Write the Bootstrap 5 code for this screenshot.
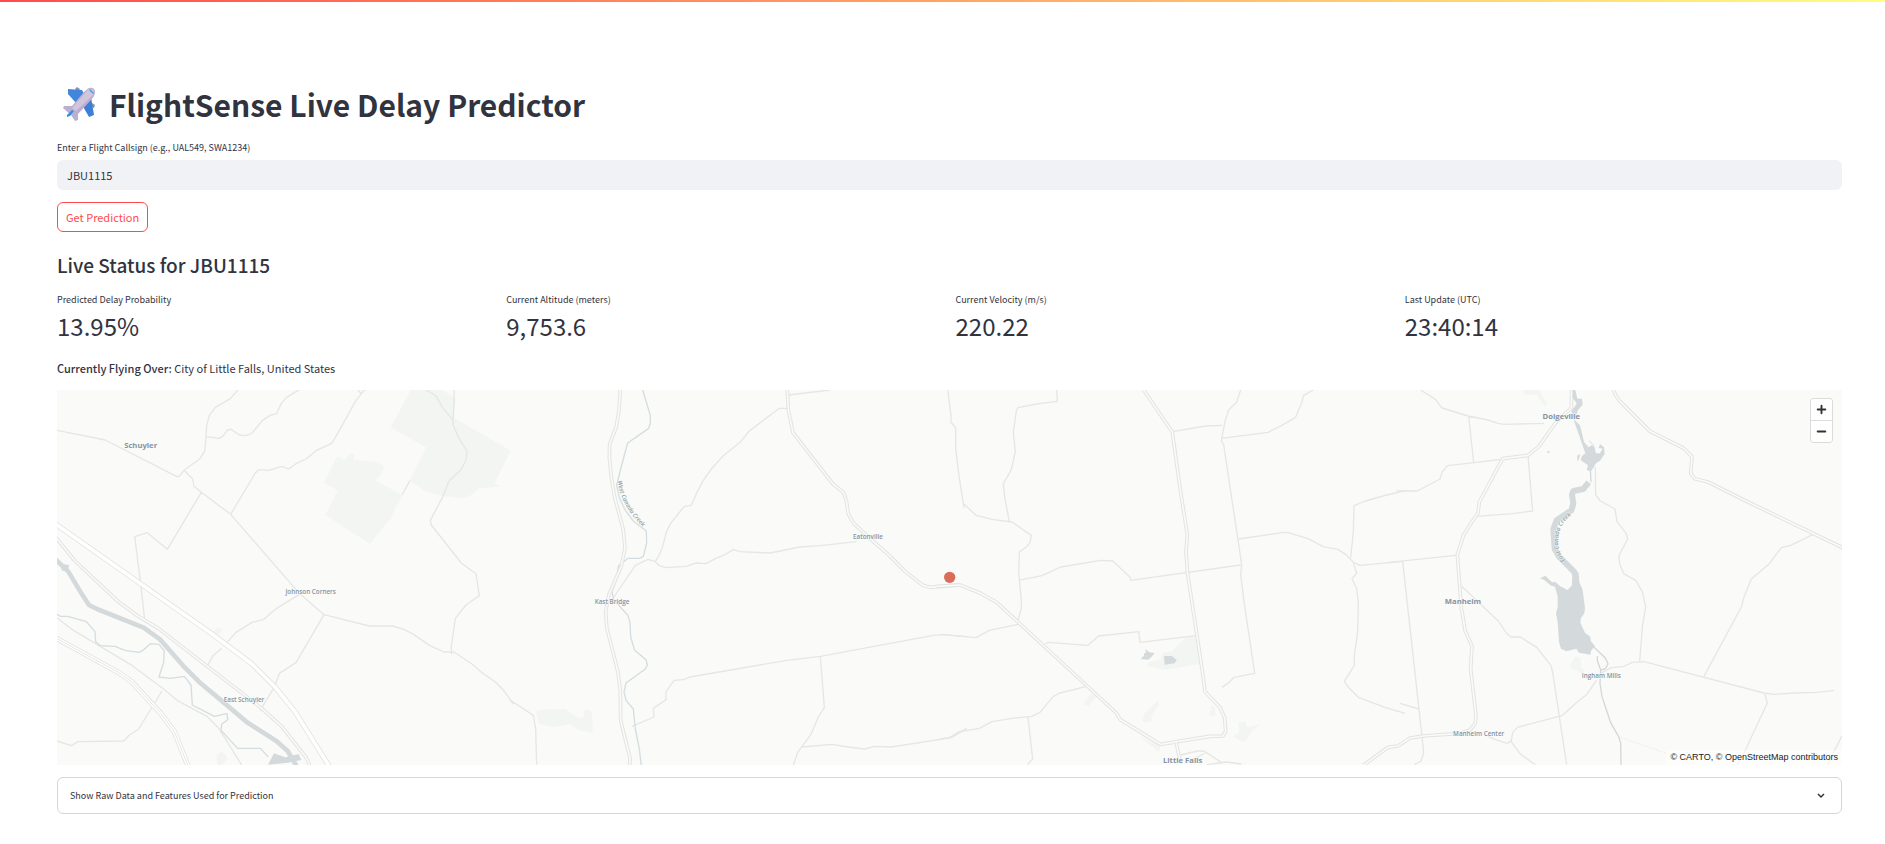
<!DOCTYPE html>
<html lang="en">
<head>
<meta charset="utf-8">
<meta name="viewport" content="width=device-width, initial-scale=1">
<title>FlightSense Live Delay Predictor</title>
<link href="https://cdn.jsdelivr.net/npm/bootstrap@5.3.0/dist/css/bootstrap.min.css" rel="stylesheet">
<style>
  body { font-family: "Noto Sans CJK JP", "Liberation Sans", sans-serif; color: #31333f; font-size: 11px; line-height: 18px; background: #fff; }
  .top-strip { height: 2px; background: linear-gradient(90deg, #ff4b4b, #fffd80); }
  .page { padding: 82px 43px 30px 57px; }
  .page-title { font-size: 30px; line-height: 40px; font-weight: 700; gap: 13px; padding-left: 5px; }
  .small-label { font-size: 9px; line-height: 16px; }
  .callsign { background: #f0f2f6; border: 0; border-radius: 6px; height: 30px; padding: 0 10px; font-size: 11px; color: #31333f; }
  .callsign:focus { background: #f0f2f6; color: #31333f; }
  .predict { --bs-btn-color: #ff4b4b; --bs-btn-border-color: #ff4b4b; --bs-btn-hover-bg: #ff4b4b; --bs-btn-hover-color: #fff; --bs-btn-hover-border-color: #ff4b4b; --bs-btn-active-bg: #ff4b4b; --bs-btn-bg: #fff; height: 30px; margin-top: 12px; padding: 0 8px; font-size: 11px; line-height: 18px; border-radius: 6px; }
  .section-title { margin: 20px 0 14px; font-size: 19px; line-height: 26px; font-weight: 500; }
  .metrics { display: grid; grid-template-columns: repeat(4, 1fr); gap: 12px; }
  .metric-value { font-size: 24px; line-height: 36px; }
  .over-text { margin-top: 15px; }
  .over-text strong { font-weight: 500; }
  .map-box { margin-top: 13px; height: 375px; background: #fafaf8; overflow: hidden; }
  .map-box > svg { width: 100%; height: 100%; display: block; }
  .zoom-group { top: 9px; right: 10px; width: 21px; border-radius: 3px; box-shadow: 0 0 0 1px rgba(0,0,0,.12); background: #fff; overflow: hidden; }
  .zoom-group button { height: 21px; padding: 0; border: 0; background: #fff; display: flex; align-items: center; justify-content: center; }
  .zoom-group button + button { height: 22px; border-top: 1px solid #ddd; }
  .zoom-group svg { width: 21px; height: 21px; }
  .credits { right: 0; bottom: 0; padding: 0 4px; background: rgba(255,255,255,.5); font: 9px/15px "Liberation Sans", sans-serif; color: #222; }
  .credits a { color: inherit; text-decoration: none; }
  .raw-data { margin-top: 12px; border: 1px solid #d6d6d9; border-radius: 6px; }
  .raw-data summary { list-style: none; height: 35px; padding: 0 14px 0 12px; }
  .raw-data summary::-webkit-details-marker { display: none; }
  .green { fill: #f2f5f2; }
  .lake { fill: #d4dadc; }
  .minor { fill: none; stroke: #e6e6e4; stroke-width: 4; stroke-linejoin: round; }
  .stream { fill: none; stroke: #d4dde1; stroke-width: 4; stroke-linejoin: round; }
  .river { fill: none; stroke: #d4dadc; stroke-width: 14; stroke-linejoin: round; }
  .casing { fill: none; stroke: #e3e3e3; stroke-width: 11; stroke-linejoin: round; }
  .lane { fill: none; stroke: #fafaf8; stroke-width: 5; stroke-linejoin: round; }
  .wide { stroke-width: 16; }
  .wide-lane { stroke-width: 11; stroke: #fff; }
  .median { fill: none; stroke: #e6e6e4; stroke-width: 3; }
  .place { font-family: "Open Sans", sans-serif; fill: #8594a3; text-anchor: middle; stroke: #fafaf8; stroke-width: 3; paint-order: stroke; }
  .town { font-size: 23px; font-weight: 700; }
  .hamlet { font-size: 19px; font-weight: 600; }
  .creek { font-size: 18px; font-style: italic; font-weight: 600; fill: #8fa3a8; font-family: "Open Sans", sans-serif; stroke: #fafaf8; stroke-width: 2; paint-order: stroke; }
</style>
</head>
<body>
<div class="top-strip"></div>
<main class="page d-flex flex-column">
  <h1 class="page-title d-flex align-items-center mb-0">
    <svg width="34" height="36" viewBox="0 0 34 36" aria-hidden="true">
      <path d="M13 3l2-2 3 2-2 3zM30 17l3 2-1 3-3-1z" fill="#8a93a8"/>
      <path d="M6 3l14 1 3 6-8 8-9-10z" fill="#4186dc"/>
      <path d="M29 11l3 18-5 2-8-14z" fill="#3d7fd6"/>
      <path d="M27 2c4-1 6 1 6 4 0 3-2 6-4 8L16 28l0 6-3 1-4-6-8-7 1-2 8 0L22 6c2-2 3-3 5-4z" fill="#bcaed0"/>
      <path d="M26 3c3-1 6 0 6 3 0 2-2 4-3 5L14 25l-4-3L23 7z" fill="#d5cbe0" opacity=".8"/>
      <path d="M28 3l4 4-1 1-4-4z" fill="#36a5e0"/>
      <path d="M5 29l5-5 2 1-4 5-3 1z" fill="#328fea"/>
    </svg>
    <span>FlightSense Live Delay Predictor</span>
  </h1>
  <label for="callsign" class="small-label mt-3 mb-1">Enter a Flight Callsign (e.g., UAL549, SWA1234)</label>
  <input id="callsign" type="text" class="callsign form-control shadow-none" value="JBU1115">
  <button type="button" class="predict btn align-self-start">Get Prediction</button>
  <h2 class="section-title">Live Status for JBU1115</h2>
  <div class="metrics">
    <div><div class="small-label">Predicted Delay Probability</div><div class="metric-value">13.95%</div></div>
    <div><div class="small-label">Current Altitude (meters)</div><div class="metric-value">9,753.6</div></div>
    <div><div class="small-label">Current Velocity (m/s)</div><div class="metric-value">220.22</div></div>
    <div><div class="small-label">Last Update (UTC)</div><div class="metric-value">23:40:14</div></div>
  </div>
  <p class="over-text mb-0"><strong>Currently Flying Over:</strong> City of Little Falls, United States</p>
  <div class="map-box position-relative">
    <svg viewBox="0 0 5355 1125" preserveAspectRatio="xMidYMid slice" role="img" aria-label="Map of the aircraft position">
      <!-- west: Schuyler -->
      <g transform="translate(-21 -15)">
        <path class="green" d="M1083 15h92l42 24-5 60 170 98-48 96 16 12-60 4-28 22-20 8-68-6-50-16-44-30 48-100-106-60zM862 214l22 12 16-20h12v20l60 4 30 12-6 24-20 20 80 44-36 72-60 74-134-86 38-74-42-22zM478 750l24-22 12 2v10l-16 12zM500 1110l14-10 14 10 4 14-18 16h-12z"/>
        <path class="minor" d="M1080 286l-24 44M21 136l145 29 215 110 8-2 13-17 48-35 14-22 4-43 2-35 8-30 18-24 45-26 28-32 10-30M468 155l40 5 12-8 12-17 12-2 24 17 20 2 18-8 32-38 22-15 20-5 14-31 16-18 46-28M402 256l26 26 4 22 22 18 88 66 206 237M454 322L352 493l-60-50-38 12 18 140 12 110M542 388l74-124 10-10 30 2 40-12 20 8 22-16 30-14 32-26 44-20 12-18 62-112 24-30 28-11M924 15l10 12M1128 15l30 18 18 32 34 42M1213 15l-4 105 20 44 22 34-2 24-14 30-38 36-18 46-38 72 3 14 90 114 44 32 10 66-40 28-32 40-12 84 1 24M748 628l-74 46-34 30-34 8-48 30-32 36M748 625l74 64 136 34h70l34 10 30 16 46 32 44 20h30l54 36 30 26 40 28 24 24 30 42M822 689l-84 144-50 32-14 40-44 72M515 790l-26 22-20 36M21 698l46 36 180 108 94 70 40 34 90 48 34 34 70 112M336 918l-70 114-28 18-16 18-138 2-20 12-43-14"/>
        <path class="stream" d="M21 688l10 6h22l56 16 26 30 2 30 14 12 44 2 30 12 42 6 12-6 22-20 26 2 16 20-2 34-14 44 34 4 42-6 20 26 4 60 66 34 38-8 2 18-18 14-2 18 50 54h68l24 26"/>
        <path class="river" d="M15 522l40 38 36 60 26 40 24 12 140 56 50 36 70 80 50 50 60 50 80 68 88 56 34 30 26 44"/>
        <path class="lake" d="M21 520l20 18 16 2-2 12-18 6zM654 1139l18-34 34 12 40-10 8 18-40 8z"/>
        <path class="casing wide" d="M15 416l470 330 120 90 70 70 60 74 106 169"/><path class="lane wide-lane" d="M15 416l470 330 120 90 70 70 60 74 106 169"/>
        <path class="casing" d="M15 454l60 74 130 122 60 44 60 36 310 240 60 54 74 94 10 24"/><path class="lane" d="M15 454l60 74 130 122 60 44 60 36 310 240 60 54 74 94 10 24"/>
        <path class="casing wide" d="M15 758l190 104 40 28 88 96 40 54 40 100"/><path class="lane wide-lane" d="M15 758l190 104 40 28 88 96 40 54 40 100"/><path class="median" d="M15 758l190 104 40 28 88 96 40 54 40 100"/>
        <text class="place town" x="272" y="190">Schuyler</text>
        <text class="place hamlet" x="782" y="626">Johnson Corners</text>
        <text class="place hamlet" x="582" y="950">East Schuyler</text>
      </g>
      <!-- centre west: West Canada Creek and Eatonville -->
      <g transform="translate(1329 -15)">
        <path class="green" d="M108 980l20-6 68-2 38 26h16l6-26 20 8 2 64-40-8-28-18-50 8-34-6-10-6z"/>
        <path class="minor" d="M30 945l70 46 7 40 3 108M866 30l124-15M862 70h-24l-90 68-28 34-50 40-36 40-24 34-16 30-20 45-22 4-40 50-12 24-14 52-10 22-10 17-22-7-38 18-66 98M466 530l12 12 20 6 60-4 30-10 30 2 30-16 28-12 24-14 20 6 90 4 90-18 60-4 110-12M396 1024l66-28-2-26 38-26v-24l24-34 28-2 20-8 290-50 101-12 339-63 30-2 70 6M961 814l12 154-18 28-22 52-40 54-13 38M906 1086l90-8 48 8 50 6 30-8 50 2 180-28 46-28M1343 15l10 76v20l14 18v60l8 70 17 110"/>
        <path class="stream" d="M428 15l23 76v24l-6 16-62 43-18 66-15 60 8 38 18 38 24 32 39 30 1 36-10 40-12 6h-34l-28 22-8 44-12 34 4 22 44 50 6 20 2 44 12 40 34 28 4 16-6 12-58 42-6 26 6 26 22 26 6 60 12 60 9 77"/>
        <path class="casing" d="M361 15l-4 60-8 50-20 52-1 40 6 60 10 60 26 98 5 54-11 54-38 88-9 48 3 48 34 134 7 58 1 88 28 112-1 40-8 80"/><path class="lane" d="M361 15l-4 60-8 50-20 52-1 40 6 60 10 60 26 98 5 54-11 54-38 88-9 48 3 48 34 134 7 58 1 88 28 112-1 40-8 80"/>
        <path class="casing" d="M862 15l3 60 14 68 120 154 32 26 8 24 6 40 16 28 54 50 50 44 50 50 54 42 20 6 70-6 20-1"/><path class="lane" d="M862 15l3 60 14 68 120 154 32 26 8 24 6 40 16 28 54 50 50 44 50 50 54 42 20 6 70-6 20-1"/>
        <path id="west-creek" d="M353 288q14 94 100 156" fill="none"/>
        <text class="creek"><textPath href="#west-creek">West Canada Creek</textPath></text>
        <text class="place hamlet" x="336" y="656">Kast Bridge</text>
        <text class="place hamlet" x="1104" y="461">Eatonville</text>
      </g>
      <!-- centre east: Little Falls -->
      <g transform="translate(2649 -15)">
        <path class="green" d="M772 752l10 84-90 16-20 2-52-12 6-10 34-8 10-20 30-8 42-42zM434 950l20-24 14 10-22 26-12-2zM608 1005l6-20 40-38 4 10-24 34v18l-18 4zM808 992l6-28h8l5 28zM896 1012h20l6 16 42-12-30 24-20 30-36-14 20-14zM602 1056l60 26-6 18z"/>
        <path class="lake" d="M602 822l10-10v-8h6l-2-12 12 10 16 2-12 14-8 6zM672 813h24l14 12-6 10-30 4z"/>
        <path class="minor" d="M72 357l36 34 48 12 60 8 58 40-4 22-10 12-22 16-2 60 8 86v24l-12 42M350 15l2 34-56 7-62 12-5 10-9 62 6 60-12 54-24 42 4 40 14 74M236 586l70-14 56-26 120-20 36 2 52 48 2 10 330-46M697 140l100-17 50-2M902 15l-12 36-24 24-10 30-12 62 7 12 54 360-3 30 10 80 32 216-62 12-16 16-20 14M844 160l140-18 40-20 42-24 20-46 4-20 30-17M896 462l136-20 12 1 60 18 46 24 44 8 24 16 24 24 18 8 130-12M1400 316l-60 14-64 18-34 14-2 80-8 76M1240 535l10 30-14 16 14 30 5 40-2 90-10 70v30l-30 48 12 18 30 30 80 30 60 18M0 748l108 10 40-22 86-18M316 776l10-4 118 9 32-28 120-13 4 32 170-20M0 1062l28-4 30-18 60-10 38-20 60-10 60-6 24-12 40-48 20-10 80-20M264 996l14 126-16 17M722 1110l50-12h20l52 34M740 1132l56-28M800 1139l60-8 44 6"/>
        <path class="casing" d="M611 15l86 126 22 160 23 150-4 46 4 64 38 250 14 98v10l46 48 14 32 3 40-8 14-40 1-148 24-120-74-12-20L170 652l-50-28-60-24-70 4"/><path class="lane" d="M611 15l86 126 22 160 23 150-4 46 4 64 38 250 14 98v10l46 48 14 32 3 40-8 14-40 1-148 24-120-74-12-20L170 652l-50-28-60-24-70 4"/>
        <path class="casing" d="M708 1072l14 62"/><path class="lane" d="M708 1072l14 62"/>
        <text class="place town" x="728" y="1135">Little Falls</text>
        <circle cx="29" cy="577" r="17" fill="#da6d59"/>
      </g>
      <!-- east: Dolgeville and East Canada Creek -->
      <g transform="translate(4029 -15)">
        <path class="green" d="M368 15h50l24 42-8 8-24-36h-34zM512 836l14-22 16 4 2 30 10 8-6 10-38-18z"/>
        <path class="minor" d="M62 15l44 28 20 26 78 24 60 12 30 10 20 3 118-3M206 94l15 138M-10 318h62l68-36 6-20 16-20 80-9 90-11M384 212l14 166-60 8-108 8M-40 533l207-22M8 530l58 524 5 50-8 24-20 11M0 955l56 17M185 604l110 104 24 36 14 12h28l50 32 42 54 5 20 42 277M586 245l1 85 14 18 44 24 6 38 28 36 4 16-26 50 2 24 12 30 36 20 20 34 10 46-10 60-8 104M600 866l34-18 38-4 24-12 36-2 360 94 30 4 60-4 70-2 50-6M912 874l112-208 8-30 22-54 54-46 36-48 26-6 70-34M1094 924l8 30-70 150-20 35M1326 1052l-43 87M590 885l-30 44-26 20-46 42-136 36-14 16-4 24-12 8-38-12-24-12M332 1068l30 40 44 31"/>
        <path d="M656 1055l160 56 66 28" fill="none" stroke="#efdcdc" stroke-width="2" stroke-dasharray="5 4"/>
        <path d="M578 783l38 36 8 18-8 14-14 4-2 40 6 40 26 78 24 42 6 20 1 64M592 814v14l10 26M571 252l2 40" fill="none" stroke="#d4d7da" stroke-width="4"/>
        <path class="casing" d="M515 15l-1 54-44 40-54 76-32 26-76 10-70 130-4 32-42 64-20 62 12 160 12 70 20 44-4 70 16 138-2 24-16 20-30 10-110 8-40 6-30 20-6 4-30 4-74 54"/><path class="lane" d="M515 15l-1 54-44 40-54 76-32 26-76 10-70 130-4 32-42 64-20 62 12 160 12 70 20 44-4 70 16 138-2 24-16 20-30 10-110 8-40 6-30 20-6 4-30 4-74 54"/>
        <path class="casing" d="M640 15q6 18 20 34l90 90 100 50 26 26-4 50 12 16 40 10 120 60 290 140"/><path class="lane" d="M640 15q6 18 20 34l90 90 100 50 26 26-4 50 12 16 40 10 120 60 290 140"/>
        <path class="lake" d="M518 15h8l6 26h14l2 18-14 16-10 30 16 16 12 50 14 16 8-6 8 4 6 20h12l8-14-12-2 4-12 12 10 2 20-14 20-12 8-10 16-6 8-12-4 4-14-22-16 4-12 10-8-18-52-14-40-10-34 10-14 6-10-12-16zM532 212l8-6-2 14-6 10zM440 200l6-2 4 3-4 4z"/>
        <path d="M568 168q14 10 16 24l-4 14" fill="none" stroke="#d4dadc" stroke-width="3"/>
        <path d="M566 292l-16 20-30 6-4 12 4 26-6 20-44 30-10 26 4 60 14 24 44 44 8 20" fill="none" stroke="#d4dadc" stroke-width="18" stroke-linejoin="round"/>
        <path class="lake" d="M420 580l16-8 20 20 10-1 14 12 22 12 14-14 1-40h18l3 30 10 24 7 54-2 16-10 14-2 14 14 30 16 12 2 14 12 14-12 14-2 12-34-6-8-12-30 8-16-8-6-20-4-60-5-26 5-18v-32l-8-30-14-4-18-16z"/>
        <path id="east-creek" d="M496 526q-30-32-18-84 6-36 64-72" fill="none"/>
        <text class="creek"><textPath href="#east-creek">East Canada Creek</textPath></text>
        <text class="place town" x="484" y="102">Dolgeville</text>
        <text class="place town" x="189" y="656">Manheim</text>
        <text class="place hamlet" x="604" y="880">Ingham Mills</text>
        <text class="place hamlet" x="236" y="1054">Manheim Center</text>
      </g>
    </svg>
    <div class="zoom-group position-absolute d-flex flex-column">
      <button type="button" aria-label="Zoom in"><svg viewBox="0 0 22 22"><path d="M11 7v8M7 11h8" stroke="#333" stroke-width="2" stroke-linecap="round"/></svg></button>
      <button type="button" aria-label="Zoom out"><svg viewBox="0 0 22 22"><path d="M7 11h8" stroke="#333" stroke-width="2" stroke-linecap="round"/></svg></button>
    </div>
    <div class="credits position-absolute"><a href="#">© CARTO</a>, <a href="#">© OpenStreetMap</a> contributors</div>
  </div>
  <details class="raw-data">
    <summary class="small-label d-flex align-items-center justify-content-between">
      <span>Show Raw Data and Features Used for Prediction</span>
      <svg width="12" height="12" viewBox="0 0 12 12" aria-hidden="true"><path d="M3 4l3 3 3-3" fill="none" stroke="#31333f" stroke-width="1.5"/></svg>
    </summary>
  </details>
</main>
<script src="https://cdn.jsdelivr.net/npm/bootstrap@5.3.0/dist/js/bootstrap.bundle.min.js"></script>
</body>
</html>
